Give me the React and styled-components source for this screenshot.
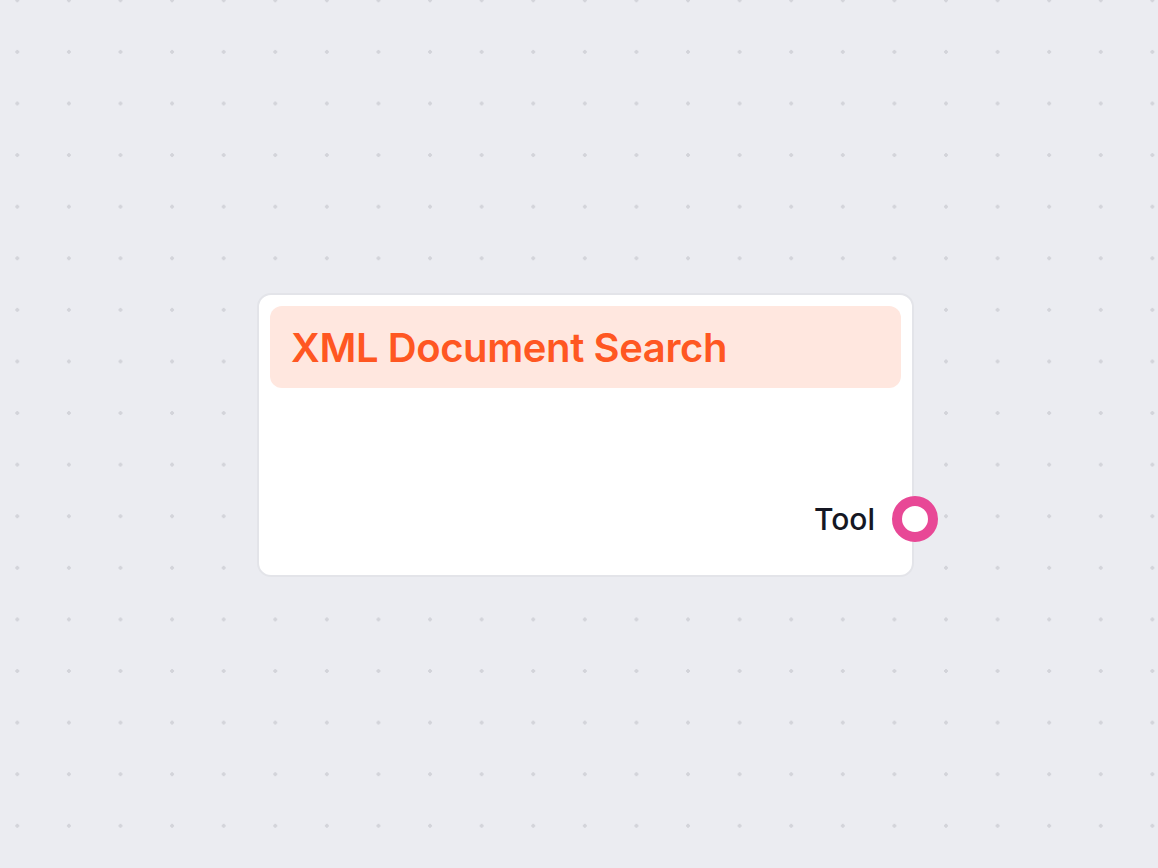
import React from "react";
import styled, { createGlobalStyle } from "styled-components";

const GlobalStyle = createGlobalStyle`
  html, body {
    margin: 0;
    padding: 0;
    width: 100%;
    height: 100%;
    overflow: hidden;
  }
  body {
    font-family: Inter, "Noto Sans", sans-serif;
    background: #ebecf1;
  }
`;

const Canvas = styled.div`
  position: relative;
  width: 1158px;
  height: 868px;
  background-color: #ebecf1;
  background-image: radial-gradient(circle, #d3d4da 1.7px, transparent 2.1px);
  background-size: 51.6px 51.6px;
  background-position: -8.5px -25.5px;
`;

const Node = styled.div`
  position: absolute;
  left: ${({ x }) => x}px;
  top: ${({ y }) => y}px;
  width: 657px;
  height: 284px;
  box-sizing: border-box;
  background: #ffffff;
  border: 2px solid #e3e4e9;
  border-radius: 14px;
  padding: 11px;
  display: flex;
  flex-direction: column;
`;

const Header = styled.div`
  height: 82px;
  background: #ffe7df;
  border-radius: 12px;
  display: flex;
  align-items: center;
  padding: 0 21px;
`;

const Title = styled.h1`
  margin: 0;
  font-size: 40px;
  font-weight: 600;
  letter-spacing: -0.4px;
  color: #ff5722;
`;

const Body = styled.div`
  flex: 1;
  display: flex;
  flex-direction: column;
  justify-content: flex-end;
  padding-bottom: 22px;
`;

const OutputRow = styled.div`
  position: relative;
  display: flex;
  justify-content: flex-end;
  align-items: center;
  height: 46px;
  padding-right: 26px;
`;

const Label = styled.span`
  font-size: 30px;
  font-weight: 500;
  color: #151723;
`;

const Handle = styled.span`
  position: absolute;
  right: -37px;
  top: 0;
  width: 46px;
  height: 46px;
  box-sizing: border-box;
  border-radius: 50%;
  border: 10px solid ${({ color }) => color};
  background: #ffffff;
`;

export default function App() {
  return (
    <>
      <GlobalStyle />
      <Canvas>
        <Node x={257} y={293}>
          <Header>
            <Title>XML Document Search</Title>
          </Header>
          <Body>
            <OutputRow>
              <Label>Tool</Label>
              <Handle color="#e84896" />
            </OutputRow>
          </Body>
        </Node>
      </Canvas>
    </>
  );
}
